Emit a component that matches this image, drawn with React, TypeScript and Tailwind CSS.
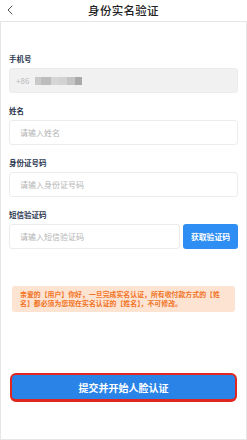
import { ChevronLeft } from 'lucide-react';

const font = { fontFamily: '"Noto Sans CJK SC", "Noto Sans", sans-serif' };

function Label({ children }: { children: string }) {
  return (
    <div className="h-[10px] leading-[10px] text-[7.5px] font-bold text-[#2a3650] mb-[4px]">
      {children}
    </div>
  );
}

function Field({ placeholder }: { placeholder: string }) {
  return (
    <div className="h-[25px] flex-1 flex items-center px-[10px] rounded-[3px] border border-[#ececec] bg-white text-[8px] text-[#b4b4b4]">
      {placeholder}
    </div>
  );
}

const blur = ['#c9c9c9', '#bcbcbc', '#d6d6d6', '#d2d2d2', '#c4c4c4', '#a9a9a9'];
const blurW = [6, 10, 8, 8, 8, 7];

export default function App() {
  return (
    <div className="w-[247px] h-[440px] bg-white flex flex-col" style={font}>
      <div className="h-[21px] relative flex items-center justify-center shrink-0">
        <ChevronLeft className="absolute left-[2px] top-[2px] w-[16px] h-[16px] text-[#333]" strokeWidth={1.3} />
        <span className="text-[11.5px] font-medium text-[#222] tracking-[0.3px]">身份实名验证</span>
      </div>
      <div className="flex-1 border border-[#e6e6e6] px-[8px] pt-[32px] flex flex-col">
        <Label>手机号</Label>
        <div className="h-[25px] flex items-center px-[6px] rounded-[3px] border border-[#ececec] bg-[#f1f1f1] text-[8px] text-[#b8b8b8]">
          <span>+86</span>
          <div className="flex ml-[6px] h-[8px]">
            {blur.map((c, i) => (
              <div key={i} className="h-full" style={{ background: c, width: blurW[i] }} />
            ))}
          </div>
        </div>

        <div className="mt-[13px]">
          <Label>姓名</Label>
          <div className="flex"><Field placeholder="请输入姓名" /></div>
        </div>

        <div className="mt-[13px]">
          <Label>身份证号码</Label>
          <div className="flex"><Field placeholder="请输入身份证号码" /></div>
        </div>

        <div className="mt-[13px]">
          <Label>短信验证码</Label>
          <div className="flex gap-[3px]">
            <Field placeholder="请输入短信验证码" />
            <button className="w-[55px] h-[25px] rounded-[3px] bg-[#2f8ef3] text-white text-[7.8px] font-bold">
              获取验证码
            </button>
          </div>
        </div>

        <div className="mt-[37px] mx-[3px] rounded-[3px] bg-[#fde3d2] px-[8px] py-[4px] text-[6.9px] leading-[9px] font-bold text-[#f2731f]">
          亲爱的【用户】你好，一旦完成实名认证，所有收付款方式的【姓名】都必须为您现在实名认证的【姓名】，不可修改。
        </div>

        <button className="mt-[61px] mx-[1px] h-[29px] rounded-[6px] bg-[#2a84e8] border-[2px] border-b-[3px] border-[#e1251f] text-white text-[10px] font-bold">
          提交并开始人脸认证
        </button>
      </div>
    </div>
  );
}
